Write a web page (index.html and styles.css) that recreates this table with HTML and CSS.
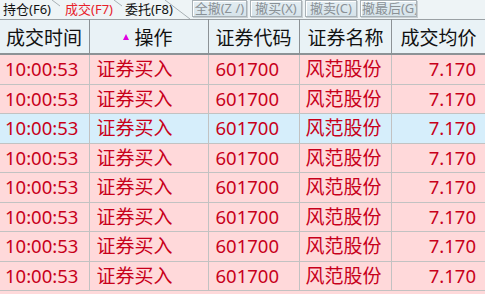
FILE: index.html
```html
<!DOCTYPE html>
<html>
<head>
<meta charset="utf-8">
<link rel="stylesheet" href="styles.css">
</head>
<body>
<div class="toolbar">
  <div class="tab tab1"><span class="tab-label">持仓(F6)</span><svg class="slant short" width="10" height="19" viewBox="0 0 10 19"><line x1="0" y1="0" x2="8" y2="6" /></svg></div>
  <div class="tab tab2"><span class="tab-label active">成交(F7)</span><svg class="slant short" width="10" height="19" viewBox="0 0 10 19"><line x1="0" y1="0" x2="8" y2="6" /></svg></div>
  <div class="tab tab3"><span class="tab-label">委托(F8)</span><svg class="slant long" width="26" height="19" viewBox="0 0 26 19"><line x1="0" y1="0" x2="25" y2="19" /></svg></div>
  <div class="buttons">
    <span class="btn b1">全撤(Z /)</span>
    <span class="btn b2">撤买(X)</span>
    <span class="btn b3">撤卖(C)</span>
    <span class="btn b4">撤最后(G)</span>
  </div>
</div>
<div class="grid-wrap">
<table class="grid">
  <colgroup>
    <col class="c1"><col class="c2"><col class="c3"><col class="c4"><col class="c5">
  </colgroup>
  <thead>
    <tr>
      <th>成交时间</th>
      <th class="sorted"><span class="tri"></span>操作</th>
      <th>证券代码</th>
      <th>证券名称</th>
      <th>成交均价</th>
    </tr>
  </thead>
  <tbody>
    <tr><td>10:00:53</td><td>证券买入</td><td>601700</td><td>风范股份</td><td class="num">7.170</td></tr>
    <tr><td>10:00:53</td><td>证券买入</td><td>601700</td><td>风范股份</td><td class="num">7.170</td></tr>
    <tr class="sel"><td>10:00:53</td><td>证券买入</td><td>601700</td><td>风范股份</td><td class="num">7.170</td></tr>
    <tr><td>10:00:53</td><td>证券买入</td><td>601700</td><td>风范股份</td><td class="num">7.170</td></tr>
    <tr><td>10:00:53</td><td>证券买入</td><td>601700</td><td>风范股份</td><td class="num">7.170</td></tr>
    <tr><td>10:00:53</td><td>证券买入</td><td>601700</td><td>风范股份</td><td class="num">7.170</td></tr>
    <tr><td>10:00:53</td><td>证券买入</td><td>601700</td><td>风范股份</td><td class="num">7.170</td></tr>
    <tr><td>10:00:53</td><td>证券买入</td><td>601700</td><td>风范股份</td><td class="num">7.170</td></tr>
  </tbody>
</table>
</div>
</body>
</html>
```

FILE: styles.css
```css
html, body {
  margin: 0;
  padding: 0;
  width: 485px;
  height: 294px;
  overflow: hidden;
  background: #eef4f6;
  font-family: "Noto Sans", "Noto Sans CJK SC", sans-serif;
}

.toolbar {
  display: flex;
  align-items: stretch;
  height: 19px;
  background: #eef4f6;
  font-size: 13px;
  line-height: 19px;
  color: #111;
}

.tab {
  display: flex;
  align-items: flex-start;
}

.tab-label {
  white-space: nowrap;
}

.tab1 { padding-left: 3px; }
.tab2 { padding-left: 3px; }
.tab3 { padding-left: 1px; }

.tab-label.active { color: #e8202a; }

.slant line {
  stroke: #a8b0b4;
  stroke-width: 1;
}

.slant.short { margin-left: 1px; }
.slant.long { margin-left: -8px; }

.buttons {
  display: flex;
  gap: 3px;
  margin-left: 1px;
  height: 17px;
}

.btn {
  display: block;
  box-sizing: border-box;
  height: 17px;
  line-height: 15px;
  padding: 0 1px;
  border: 1px solid #a9b2b7;
  box-shadow: inset 1px 1px 0 #ffffff, 1px 1px 0 #c9d0d4;
  background: linear-gradient(#e4eef3, #d6e3ea);
  color: #8a9196;
  white-space: nowrap;
  font-size: 13px;
  text-align: center;
  overflow: hidden;
}

.b1 { width: 55px; }
.b2 { width: 52px; }
.b3 { width: 52px; }
.b4 { width: 57px; }

.grid-wrap {
  height: 275px;
  background: #ffd9da;
}

.grid {
  border-collapse: collapse;
  table-layout: fixed;
  width: 485px;
  border-top: 1px solid #9aa0a4;
}

.c1 { width: 89px; }
.c2 { width: 119px; }
.c3 { width: 91px; }
.c4 { width: 92px; }
.c5 { width: 94px; }

th {
  height: 33px;
  padding: 0 0 0 6px;
  background: #e9f2f6;
  border-right: 1px solid #8c9296;
  border-bottom: 2px solid #8c9296;
  font-weight: normal;
  font-size: 19px;
  color: #111;
  text-align: left;
  white-space: nowrap;
}

th:last-child { border-right: none; padding-left: 9px; }
th:nth-child(3) { padding-left: 7px; }
th:nth-child(4) { padding-left: 8px; }

th.sorted { padding-left: 33px; }

.tri {
  display: inline-block;
  width: 0;
  height: 0;
  border-left: 3px solid transparent;
  border-right: 3px solid transparent;
  border-bottom: 6px solid #e000e0;
  margin-right: 6px;
  vertical-align: 5px;
}

td {
  height: 28.5px;
  padding: 0 0 0 5px;
  background: #ffd9da;
  border-right: 1px solid #c2c2c2;
  border-bottom: 1px solid #c2c2c2;
  font-size: 18.5px;
  color: #c8001a;
  white-space: nowrap;
  line-height: 28px;
}

td:nth-child(2) { padding-left: 7px; font-size: 19px; }
td:nth-child(3) { padding-left: 7px; }
td:nth-child(4) { padding-left: 6px; font-size: 19px; }
td:last-child { border-right: none; }

td.num {
  text-align: right;
  padding: 0 9px 0 0;
}

tr.sel td { background: #d6eefb; }
```
